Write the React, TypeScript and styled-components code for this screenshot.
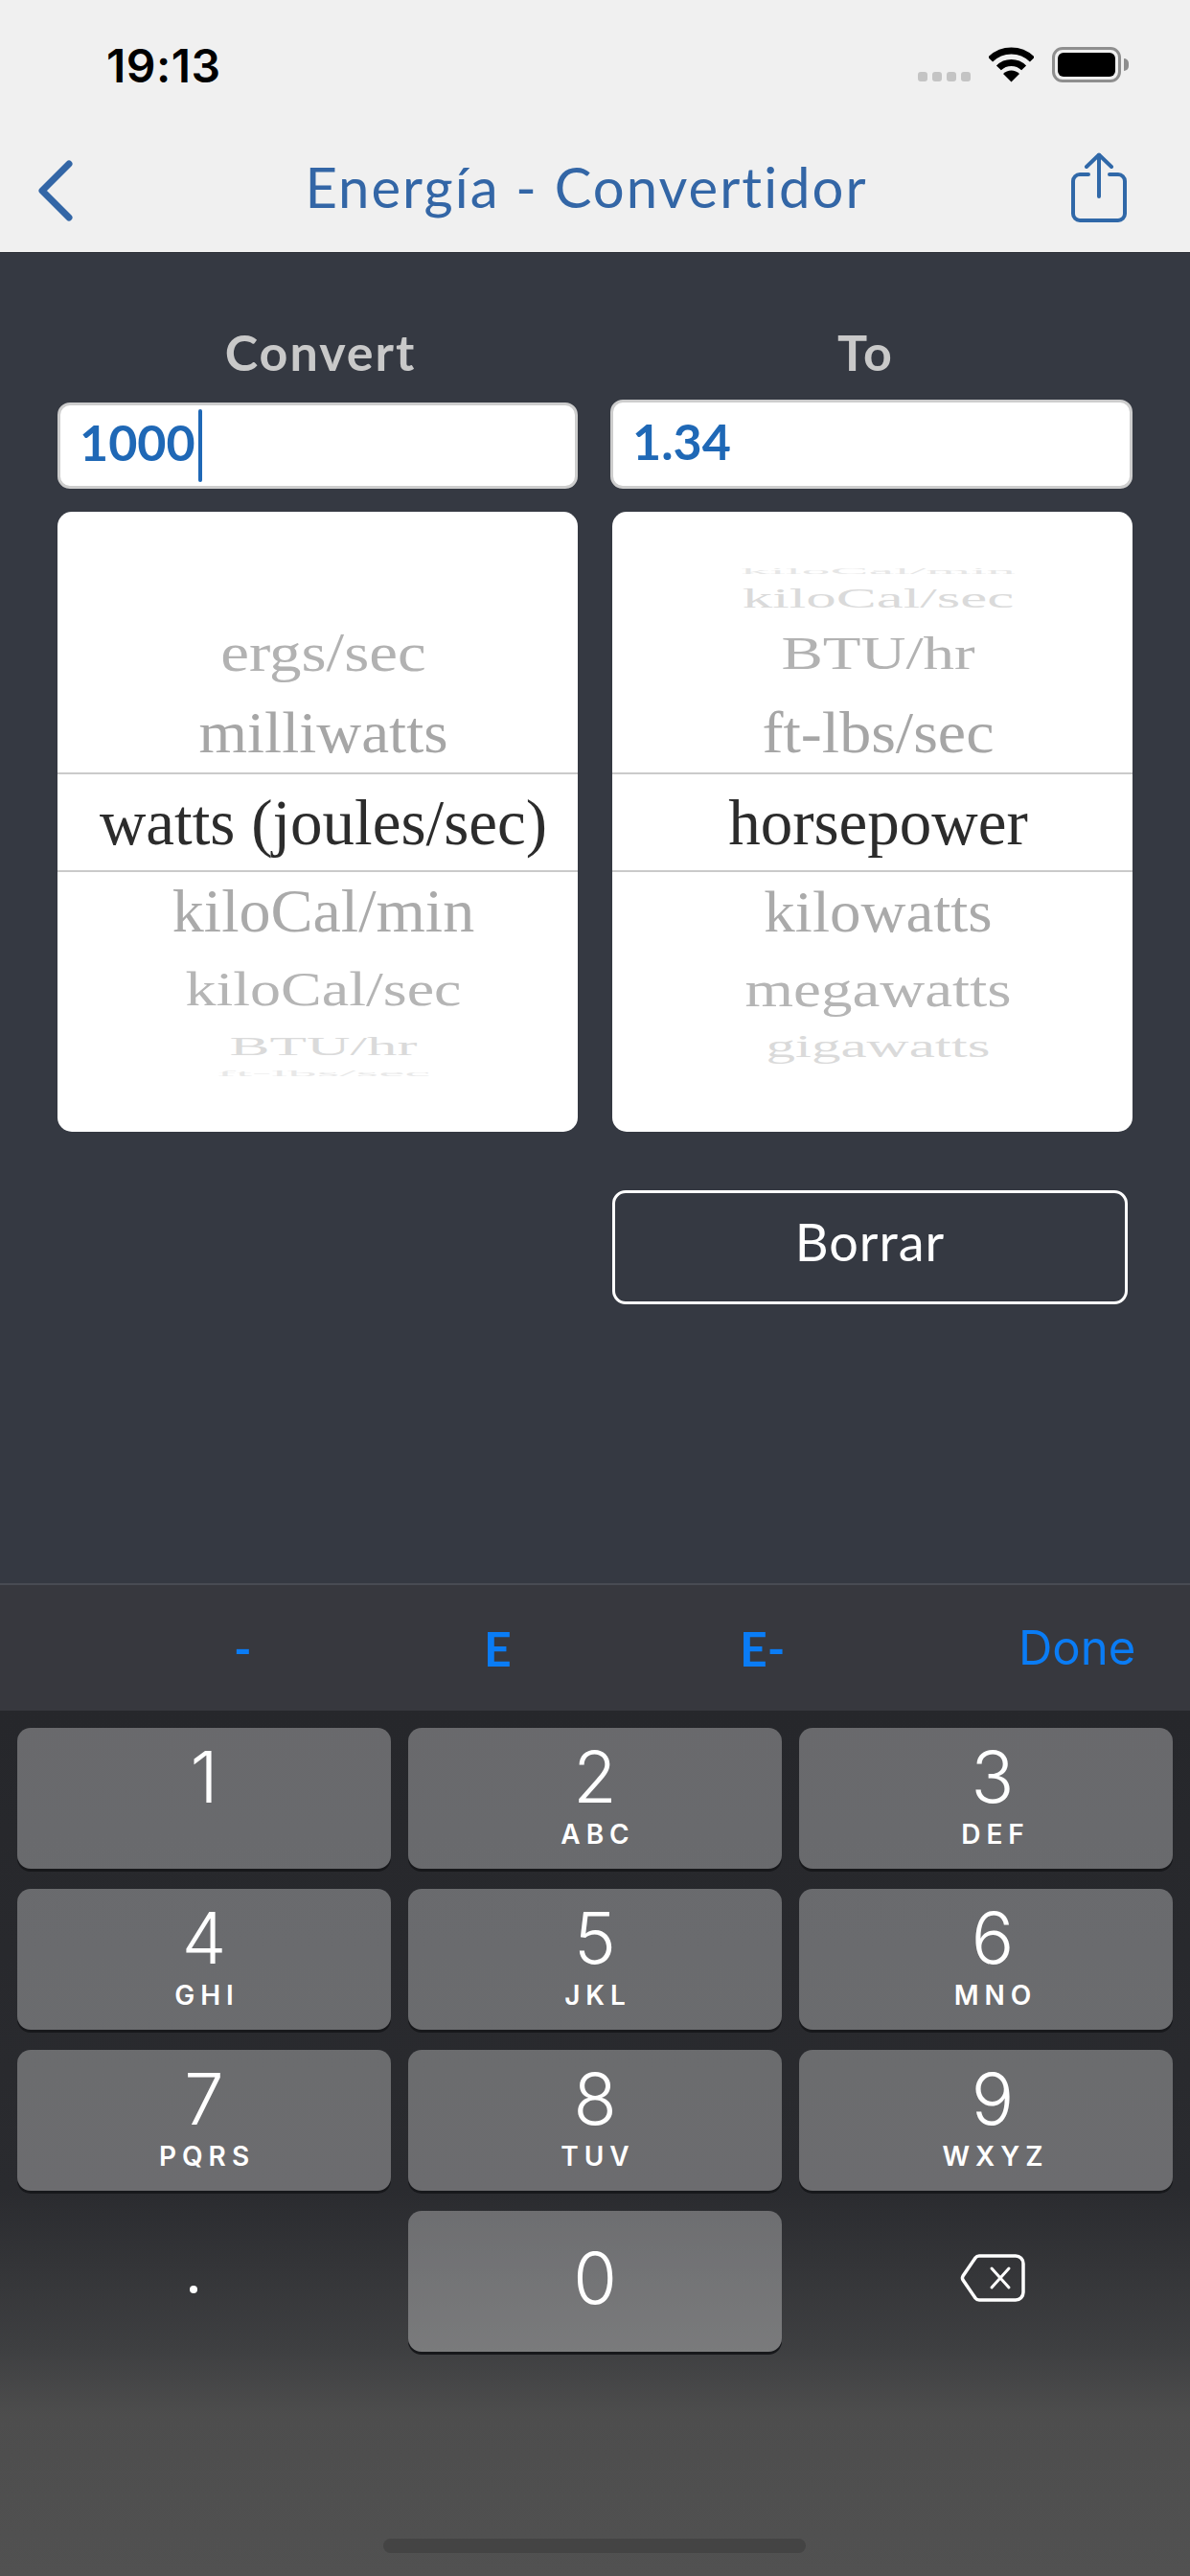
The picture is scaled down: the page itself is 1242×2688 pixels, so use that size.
import React from "react";
import styled, { createGlobalStyle } from "styled-components";

const GlobalStyle = createGlobalStyle`
  html, body {
    margin: 0;
    padding: 0;
    background: #353942;
  }
  * {
    box-sizing: border-box;
  }
`;

const Page = styled.div`
  width: 1242px;
  height: 2688px;
  display: flex;
  flex-direction: column;
  overflow: hidden;
  font-family: Lato, "Open Sans", sans-serif;
`;

const Header = styled.header`
  height: 264px;
  background: #f0f0f0;
  border-bottom: 1px solid #2c2f36;
`;

const StatusBar = styled.div`
  height: 132px;
  padding: 49px 72px 0 111px;
  display: flex;
  justify-content: space-between;
  align-items: flex-start;
`;

const Time = styled.div`
  margin-top: 2px;
  font-family: Inter, sans-serif;
  font-size: 48px;
  font-weight: 600;
  line-height: 36px;
  letter-spacing: 0.5px;
  color: #000;
`;

const StatusIcons = styled.div`
  display: flex;
  align-items: flex-end;
  height: 37px;
`;

const Dots = styled.div`
  display: flex;
  gap: 5px;
  margin: 0 19px 1px 0;
`;

const Dot = styled.span`
  width: 10px;
  height: 10px;
  border-radius: 3px;
  background: #c4c4c4;
`;

const Battery = styled.div`
  width: 72px;
  height: 37px;
  margin-left: 19px;
  padding: 3px;
  border: 3px solid #8e8e8e;
  border-radius: 11px;
  position: relative;
  &::after {
    content: "";
    position: absolute;
    right: -11px;
    top: 9px;
    width: 5px;
    height: 13px;
    border-radius: 0 6px 6px 0;
    background: #8e8e8e;
  }
`;

const BatteryFill = styled.div`
  width: 100%;
  height: 100%;
  border-radius: 6px;
  background: #000;
`;

const NavBar = styled.nav`
  height: 131px;
  padding: 0 58px 0 40px;
  display: grid;
  grid-template-columns: 1fr auto 1fr;
  align-items: start;
`;

const BackIcon = styled.svg`
  width: 36px;
  height: 64px;
  margin-top: 35px;
`;

const Title = styled.h1`
  margin: 0;
  font-size: 58px;
  font-weight: 400;
  line-height: 64px;
  letter-spacing: 2px;
  padding-top: 31px;
  color: #3366a6;
  white-space: nowrap;
`;

const ShareIcon = styled.svg`
  width: 58px;
  height: 74px;
  margin: 27px 8px 0 0;
  justify-self: end;
`;

const Main = styled.main`
  flex: 1;
  background: #353942;
  padding: 74px 0 0 60px;
  display: grid;
  grid-template-columns: 543px 543px;
  grid-template-rows: 79px 93px auto auto;
  column-gap: 36px;
  align-content: start;
`;

const ColumnLabel = styled.div<{ $left: number; $right: number }>`
  padding: 0 ${(p) => p.$right}px 0 ${(p) => p.$left}px;
  font-size: 52px;
  font-weight: 700;
  line-height: 58px;
  letter-spacing: 2px;
  text-align: center;
  color: #c9c9c9;
`;

const ValueBox = styled.div<{ $height: number; $inset: number }>`
  position: relative;
  align-self: end;
  height: ${(p) => p.$height}px;
  margin-left: ${(p) => p.$inset}px;
  padding: 0 0 8px 20px;
  border: 3px solid #cdcdcd;
  border-radius: 13px;
  background: #fff;
  display: flex;
  align-items: center;
  font-size: 52px;
  font-weight: 700;
  color: #1f68b6;
`;

const Caret = styled.span`
  position: absolute;
  left: 144px;
  top: 4px;
  width: 4px;
  height: 76px;
  border-radius: 2px;
  background: #1f68b6;
`;

const Wheel = styled.div`
  grid-row: 3;
  margin-top: 24px;
  height: 647px;
  padding-top: 48px;
  border-radius: 15px;
  background: #fff;
  overflow: hidden;
  font-family: "Liberation Serif", "Times New Roman", serif;
`;

const WheelRow = styled.div<{ $height: number; $selected?: boolean }>`
  height: ${(p) => p.$height}px;
  padding-left: 12px;
  display: flex;
  align-items: center;
  justify-content: center;
  white-space: nowrap;
  border-top: ${(p) => (p.$selected ? "2px solid #cacaca" : "none")};
  border-bottom: ${(p) => (p.$selected ? "2px solid #cacaca" : "none")};
`;

const WheelText = styled.span<{ $size: number; $scale: number; $tone: string }>`
  display: block;
  font-size: ${(p) => p.$size}px;
  line-height: 1;
  color: ${(p) => p.$tone};
  transform: scaleY(${(p) => p.$scale});
`;

const ClearButton = styled.button`
  grid-column: 2;
  grid-row: 4;
  width: 538px;
  height: 119px;
  margin-top: 61px;
  border: 3px solid #fff;
  border-radius: 14px;
  background: transparent;
  color: #fff;
  font-family: Lato, sans-serif;
  font-size: 54px;
  letter-spacing: 1px;
  padding: 0 0 12px;
`;

const Accessory = styled.div`
  height: 133px;
  background: #37383e;
  border-top: 2px solid #484b53;
  display: grid;
  grid-template-columns: 244px 261px 267px 291px auto;
  align-items: center;
  font-size: 50px;
  font-weight: 700;
  color: #0a7cf5;
`;

const AccessoryKey = styled.span`
  line-height: 1;
`;

const DoneKey = styled.span`
  font-family: Inter, sans-serif;
  font-weight: 400;
  font-size: 49px;
  line-height: 1;
`;

const Keyboard = styled.section`
  height: 903px;
  padding: 18px 18px 0;
  position: relative;
  background: linear-gradient(
    180deg,
    #26272b 0,
    #2a2b2f 500px,
    #3e3f41 665px,
    #4d4d4d 735px,
    #515151 903px
  );
`;

const Keypad = styled.div`
  display: grid;
  grid-template-columns: repeat(3, 390px);
  grid-auto-rows: 147px;
  column-gap: 18px;
  row-gap: 21px;
  font-family: Inter, sans-serif;
  color: #fff;
`;

// the third column's glyphs sit a little right of the key's centre in the reference
const Key = styled.div<{ $ghost?: boolean; $centered?: boolean; $nudge?: number }>`
  display: flex;
  flex-direction: column;
  align-items: center;
  justify-content: ${(p) => (p.$centered ? "center" : "flex-start")};
  gap: 23px;
  padding: ${(p) => (p.$centered ? "0 0 8px" : "24px 0 0")};
  padding-left: ${(p) => p.$nudge ?? 0}px;
  border-radius: 14px;
  background: ${(p) => (p.$ghost ? "transparent" : "rgba(255, 255, 255, 0.31)")};
  box-shadow: ${(p) => (p.$ghost ? "none" : "0 3px 0 #17181b")};
`;

const Digit = styled.span`
  font-size: 74px;
  line-height: 54px;
  font-weight: 300;
`;

const Letters = styled.span`
  font-size: 28px;
  line-height: 21px;
  font-weight: 600;
  letter-spacing: 6px;
  margin-right: -6px;
`;

const Dotkey = styled.span`
  width: 8px;
  height: 8px;
  margin: 24px 0 0;
  transform: translateX(-11px);
  border-radius: 50%;
  background: #fff;
`;

const BackspaceIcon = styled.svg`
  width: 68px;
  height: 50px;
`;

const HomeBar = styled.div`
  position: absolute;
  left: 400px;
  bottom: 24px;
  width: 441px;
  height: 15px;
  border-radius: 8px;
  background: #444;
`;

type WheelItem = { label: string; size: number; scale: number; tone: string };

// slot heights follow the squash of the wheel, tallest in the middle
const slots = [28, 28, 86, 82, 104, 82, 80, 38, 20];

const leftWheel: (WheelItem | null)[] = [
  null,
  null,
  { label: "ergs/sec", size: 67, scale: 0.84, tone: "#b2b2b2" },
  { label: "milliwatts", size: 65, scale: 0.93, tone: "#a6a6a6" },
  { label: "watts (joules/sec)", size: 67, scale: 1, tone: "#2c2c2c" },
  { label: "kiloCal/min", size: 66, scale: 0.95, tone: "#aaaaaa" },
  { label: "kiloCal/sec", size: 64, scale: 0.8, tone: "#b5b5b5" },
  { label: "BTU/hr", size: 63, scale: 0.44, tone: "#dadada" },
  { label: "ft-lbs/sec", size: 61, scale: 0.14, tone: "#e8e8e8" },
];

const rightWheel: (WheelItem | null)[] = [
  { label: "kiloCal/min", size: 60, scale: 0.14, tone: "#e6e6e6" },
  { label: "kiloCal/sec", size: 63, scale: 0.47, tone: "#dadada" },
  { label: "BTU/hr", size: 65, scale: 0.76, tone: "#b2b2b2" },
  { label: "ft-lbs/sec", size: 66, scale: 0.93, tone: "#a6a6a6" },
  { label: "horsepower", size: 67, scale: 1, tone: "#2c2c2c" },
  { label: "kilowatts", size: 65, scale: 0.95, tone: "#aaaaaa" },
  { label: "megawatts", size: 65, scale: 0.8, tone: "#b5b5b5" },
  { label: "gigawatts", size: 61, scale: 0.55, tone: "#dadada" },
  null,
];

const keys = [
  ["1", ""],
  ["2", "ABC"],
  ["3", "DEF"],
  ["4", "GHI"],
  ["5", "JKL"],
  ["6", "MNO"],
  ["7", "PQRS"],
  ["8", "TUV"],
  ["9", "WXYZ"],
];

function PickerWheel({ items }: { items: (WheelItem | null)[] }) {
  return (
    <Wheel>
      {items.map((item, i) => (
        <WheelRow key={i} $height={slots[i]} $selected={i === 4}>
          {item && (
            <WheelText $size={item.size} $scale={item.scale} $tone={item.tone}>
              {item.label}
            </WheelText>
          )}
        </WheelRow>
      ))}
    </Wheel>
  );
}

export default function App() {
  return (
    <Page>
      <GlobalStyle />
      <Header>
        <StatusBar>
          <Time>19:13</Time>
          <StatusIcons>
            <Dots>
              <Dot />
              <Dot />
              <Dot />
              <Dot />
            </Dots>
            <svg width="47" height="37" viewBox="0 0 47 37">
              <g fill="none" stroke="#000" strokeWidth="7">
                <path d="M1.6 13.1A31 31 0 0 1 45.4 13.1" />
                <path d="M10.4 21.9A18.5 18.5 0 0 1 36.6 21.9" />
              </g>
              <path d="M23.5 36.5L15 28A12 12 0 0 1 32 28Z" fill="#000" />
            </svg>
            <Battery>
              <BatteryFill />
            </Battery>
          </StatusIcons>
        </StatusBar>
        <NavBar>
          <BackIcon viewBox="0 0 36 64">
            <path
              d="M32 4L4 32L32 60"
              fill="none"
              stroke="#3366a6"
              strokeWidth="7"
              strokeLinecap="round"
              strokeLinejoin="round"
            />
          </BackIcon>
          <Title>Energía - Convertidor</Title>
          <ShareIcon viewBox="0 0 58 74">
            <g
              fill="none"
              stroke="#3068a8"
              strokeWidth="4"
              strokeLinecap="round"
              strokeLinejoin="round"
            >
              <path d="M18 23H9a7 7 0 0 0-7 7V64a7 7 0 0 0 7 7H49a7 7 0 0 0 7-7V30a7 7 0 0 0-7-7H40" />
              <path d="M29 3V46" />
              <path d="M16 15L29 2.500L42 15" />
            </g>
          </ShareIcon>
        </NavBar>
      </Header>
      <Main>
        <ColumnLabel $left={6} $right={0}>
          Convert
        </ColumnLabel>
        <ColumnLabel $left={0} $right={14}>
          To
        </ColumnLabel>
        <ValueBox $height={90} $inset={0}>
          1000
          <Caret />
        </ValueBox>
        <ValueBox $height={93} $inset={-2}>
          1.34
        </ValueBox>
        <PickerWheel items={leftWheel} />
        <PickerWheel items={rightWheel} />
        <ClearButton>Borrar</ClearButton>
      </Main>
      <Accessory>
        <span />
        <AccessoryKey>-</AccessoryKey>
        <AccessoryKey>E</AccessoryKey>
        <AccessoryKey>E-</AccessoryKey>
        <DoneKey>Done</DoneKey>
      </Accessory>
      <Keyboard>
        <Keypad>
          {keys.map(([digit, letters], i) => (
            <Key key={digit} $nudge={i % 3 === 2 ? 14 : 0}>
              <Digit>{digit}</Digit>
              {letters && <Letters>{letters}</Letters>}
            </Key>
          ))}
          <Key $ghost $centered>
            <Dotkey />
          </Key>
          <Key $centered>
            <Digit>0</Digit>
          </Key>
          <Key $ghost $centered $nudge={14}>
            <BackspaceIcon viewBox="0 0 68 50">
              <path
                d="M20 2H58a8 8 0 0 1 8 8V40a8 8 0 0 1-8 8H20a5 5 0 0 1-4-2L3 27a4 4 0 0 1 0-4L16 4a5 5 0 0 1 4-2Z"
                fill="none"
                stroke="#fff"
                strokeWidth="3.500"
              />
              <path
                d="M33 15L51 35M51 15L33 35"
                fill="none"
                stroke="#fff"
                strokeWidth="3"
                strokeLinecap="round"
              />
            </BackspaceIcon>
          </Key>
        </Keypad>
        <HomeBar />
      </Keyboard>
    </Page>
  );
}
